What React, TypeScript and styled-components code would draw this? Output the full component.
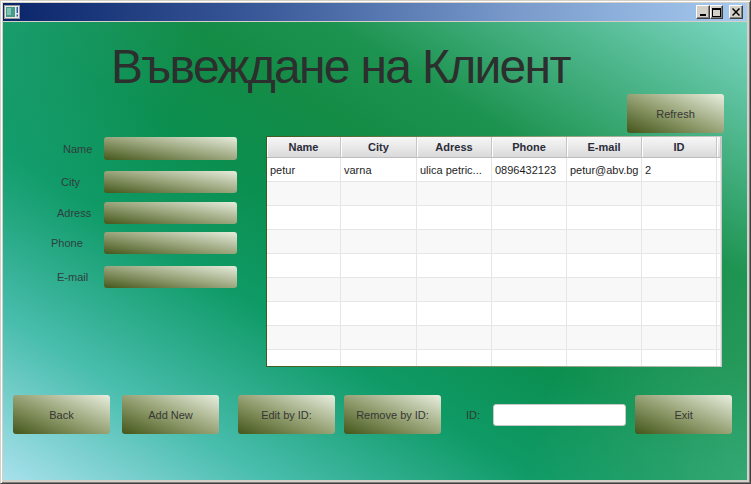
import React from "react";
import styled, { createGlobalStyle } from "styled-components";

const Global = createGlobalStyle`
  html, body { margin: 0; padding: 0; }
  body { font-family: "Liberation Sans", Arial, sans-serif; }
  * { box-sizing: border-box; }
`;

const Window = styled.div`
  width: 751px;
  height: 484px;
  background: #d4d0c8;
  border: 1px solid;
  border-color: #d4d0c8 #404040 #404040 #d4d0c8;
  box-shadow: inset 1px 1px #ffffff, inset -1px -1px #808080;
  padding: 2px 3px 3px 2px;
  display: flex;
  flex-direction: column;
`;

const TitleBar = styled.div`
  height: 18px;
  margin-bottom: 1px;
  background: linear-gradient(to right, #0a246a 0%, #3a5a9a 35%, #7b9ccc 70%, #a6caf0 100%);
  display: flex;
  align-items: center;
  padding: 0 4px 0 1px;
`;

const AppIcon = styled.svg`
  width: 16px;
  height: 14px;
  flex: none;
`;

const Spacer = styled.div`
  flex: 1;
`;

const CaptionButton = styled.div<{ $ml?: number; $w?: number }>`
  width: ${(p) => p.$w ?? 14}px;
  height: 14px;
  margin-left: ${(p) => p.$ml ?? 0}px;
  background: #d4d0c8;
  border: 1px solid;
  border-color: #ffffff #404040 #404040 #ffffff;
  box-shadow: inset -1px -1px #808080;
  display: flex;
  align-items: center;
  justify-content: center;
`;

const Content = styled.div`
  flex: 1;
  position: relative;
  display: flex;
  flex-direction: column;
  background:
    radial-gradient(circle at 0% 0%, rgba(40, 170, 140, 0.5) 0px, rgba(40, 170, 140, 0) 200px),
    radial-gradient(circle at 100% 100%, rgba(80, 185, 140, 0.6) 0px, rgba(80, 185, 140, 0) 220px),
    linear-gradient(to top right, #a8e1ec 0%, #48bdad 18%, #0f9a66 36%, #0b8e4e 50%, #148c46 62%, #1d9350 72%, #7ad6c2 100%);
`;

const TitleRow = styled.div`
  height: 72px;
  padding: 16px 0 0 108px;
`;

const Title = styled.h1`
  margin: 0;
  font-family: "Liberation Sans", Arial, sans-serif;
  font-weight: normal;
  font-size: 48px;
  letter-spacing: -1.7px;
  line-height: 57px;
  color: #2c2f2d;
  white-space: nowrap;
`;

const RefreshRow = styled.div`
  height: 39px;
  display: flex;
  justify-content: flex-end;
  padding-right: 23px;
`;

const GradButton = styled.div<{ $ml?: number }>`
  width: 97px;
  height: 39px;
  flex: none;
  margin-left: ${(p) => p.$ml ?? 0}px;
  border-radius: 3px;
  background: linear-gradient(to top right, #44561a 0%, #8f9b6c 45%, #e8efdf 100%);
  display: flex;
  align-items: center;
  justify-content: center;
  font-size: 11px;
  color: #363834;
`;

const Middle = styled.div`
  height: 234px;
  margin-top: 3px;
  display: flex;
`;

const Form = styled.div`
  width: 263px;
  flex: none;
  display: flex;
  flex-direction: column;
  padding-top: 1px;
`;

const Field = styled.div<{ $mt: number; $h: number }>`
  display: flex;
  align-items: center;
  height: ${(p) => p.$h}px;
  margin-top: ${(p) => p.$mt}px;
`;

const FieldLabel = styled.div<{ $x: number }>`
  width: 101px;
  flex: none;
  padding-left: ${(p) => p.$x}px;
  font-size: 11px;
  color: #2f3e3e;
`;

const GradInput = styled.div`
  width: 133px;
  height: 100%;
  border-radius: 3px;
  background: linear-gradient(to top right, #45571b 0%, #9aa57c 50%, #e6ecdc 100%);
`;

const Table = styled.div`
  width: 456px;
  height: 231px;
  border: 1px solid;
  border-image: linear-gradient(to right, #3f5a20, #8a9a70 60%, #c8c8c8) 1;
  background: #ffffff;
  overflow: hidden;
  display: grid;
  grid-template-columns: 74px 76px 75px 75px 75px 75px 1fr;
  grid-auto-rows: 24px;
  grid-template-rows: 21px;
  align-content: start;
`;

const HeadCell = styled.div`
  height: 21px;
  background: linear-gradient(#f7f7f7, #dadada);
  border-right: 1px solid #c4c4c4;
  border-bottom: 1px solid #bdbdbd;
  box-shadow: inset 1px 0 #ffffff;
  display: flex;
  align-items: center;
  justify-content: center;
  font-size: 11px;
  font-weight: bold;
  color: #2a2c38;
`;

const Cell = styled.div<{ $alt: boolean }>`
  background: ${(p) => (p.$alt ? "#f8f8f8" : "#ffffff")};
  border-right: 1px solid #e6e6e6;
  border-bottom: 1px solid #e6e6e6;
  display: flex;
  align-items: center;
  padding-left: 3px;
  font-size: 11px;
  color: #1e1e1e;
  white-space: nowrap;
  overflow: hidden;
`;

const Bottom = styled.div`
  margin-top: 25px;
  height: 39px;
  display: flex;
  align-items: center;
  padding-left: 10px;
`;

const IdLabel = styled.div<{ $ml: number }>`
  margin-left: ${(p) => p.$ml}px;
  font-size: 11px;
  color: #2f3a34;
`;

const IdInput = styled.div<{ $ml: number }>`
  margin-left: ${(p) => p.$ml}px;
  width: 133px;
  height: 22px;
  background: #ffffff;
  border: 1px solid #c8c8c8;
  border-radius: 3px;
`;

const headers = ["Name", "City", "Adress", "Phone", "E-mail", "ID", ""];
const firstRow = ["petur", "varna", "ulica petric...", "0896432123", "petur@abv.bg", "2", ""];

const fields = [
  { label: "Name", x: 60, mt: 0, h: 23 },
  { label: "City", x: 58, mt: 11, h: 22 },
  { label: "Adress", x: 54, mt: 9, h: 22 },
  { label: "Phone", x: 48, mt: 8, h: 22 },
  { label: "E-mail", x: 54, mt: 12, h: 22 },
];

export default function App() {
  const rows = Array.from({ length: 9 }, (_, i) => (i === 0 ? firstRow : headers.map(() => "")));
  return (
    <>
      <Global />
      <Window>
        <TitleBar>
          <AppIcon viewBox="0 0 16 14">
            <rect x="0.5" y="0.5" width="15" height="13" fill="#e8e8e8" stroke="#9a9a9a" />
            <rect x="2" y="2" width="9" height="10" fill="#4a9a8a" />
            <rect x="3" y="3" width="4" height="7" fill="#7cc4b4" />
            <rect x="12.5" y="2" width="1.5" height="6" fill="#2a5aa8" />
            <rect x="12.5" y="9.5" width="1.5" height="2" fill="#2a5aa8" />
          </AppIcon>
          <Spacer />
          <CaptionButton>
            <svg width="8" height="8" viewBox="0 0 8 8">
              <rect x="1" y="6" width="6" height="2" fill="#000" />
            </svg>
          </CaptionButton>
          <CaptionButton $w={13}>
            <svg width="9" height="9" viewBox="0 0 9 9">
              <rect x="0.5" y="0.5" width="8" height="8" fill="none" stroke="#000" />
              <rect x="0" y="0" width="9" height="2" fill="#000" />
            </svg>
          </CaptionButton>
          <CaptionButton $ml={6}>
            <svg width="8" height="8" viewBox="0 0 8 8">
              <path d="M0.5 0.5 L7.5 7.5 M7.5 0.5 L0.5 7.5" stroke="#000" strokeWidth="1.5" />
            </svg>
          </CaptionButton>
        </TitleBar>
        <Content>
          <TitleRow>
            <Title>Въвеждане на Клиент</Title>
          </TitleRow>
          <RefreshRow>
            <GradButton>Refresh</GradButton>
          </RefreshRow>
          <Middle>
            <Form>
              {fields.map((f) => (
                <Field key={f.label} $mt={f.mt} $h={f.h}>
                  <FieldLabel $x={f.x}>{f.label}</FieldLabel>
                  <GradInput />
                </Field>
              ))}
            </Form>
            <Table>
              {headers.map((h, i) => (
                <HeadCell key={"h" + i}>{h}</HeadCell>
              ))}
              {rows.map((r, ri) =>
                r.map((c, ci) => (
                  <Cell key={ri + "-" + ci} $alt={ri % 2 === 1}>
                    {c}
                  </Cell>
                ))
              )}
            </Table>
          </Middle>
          <Bottom>
            <GradButton>Back</GradButton>
            <GradButton $ml={12}>Add New</GradButton>
            <GradButton $ml={19}>Edit by ID:</GradButton>
            <GradButton $ml={9}>Remove by ID:</GradButton>
            <IdLabel $ml={25}>ID:</IdLabel>
            <IdInput $ml={13} />
            <GradButton $ml={9}>Exit</GradButton>
          </Bottom>
        </Content>
      </Window>
    </>
  );
}
